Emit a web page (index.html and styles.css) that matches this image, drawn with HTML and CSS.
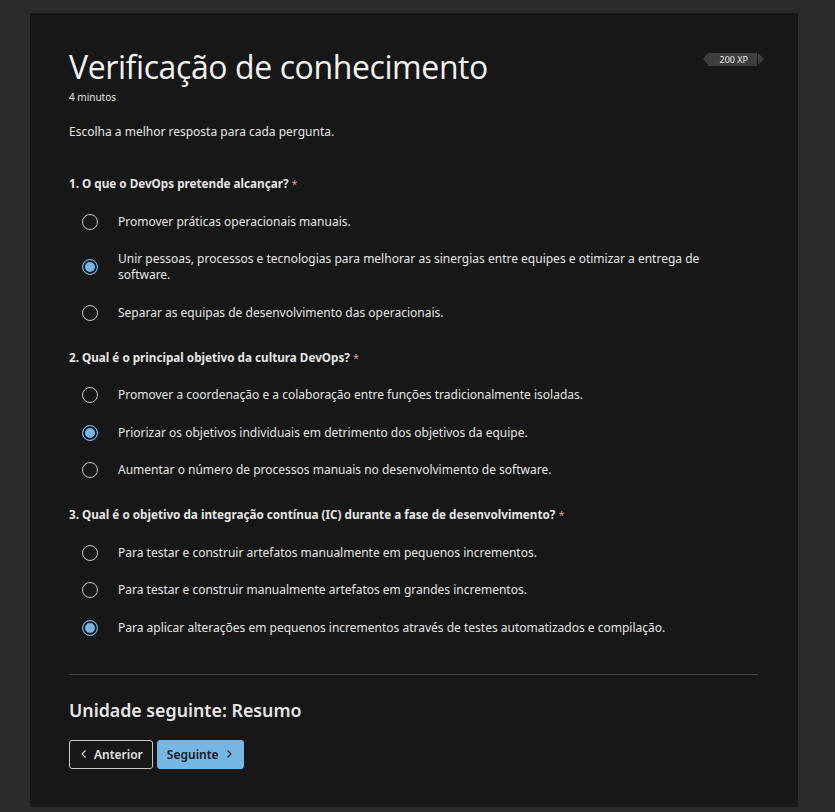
FILE: index.html
```html
<!DOCTYPE html>
<html lang="pt">
<head>
    <meta charset="UTF-8">
    <meta name="viewport" content="width=device-width, initial-scale=1.0">
    <title>Verificação de conhecimento</title>
    <link rel="stylesheet" href="styles.css">
</head>
<body>
    <div class="cartao">
        <div class="cabecalho">
            <div>
                <h1>Verificação de conhecimento</h1>
                <p class="duracao">4 minutos</p>
            </div>
            <span class="xp">200 XP</span>
        </div>
        <p class="instrucao">Escolha a melhor resposta para cada pergunta.</p>

        <div class="pergunta">
            <p class="enunciado">1. O que o DevOps pretende alcançar? <span class="obrig">*</span></p>
            <label class="opcao"><span class="radio"></span><span class="texto">Promover práticas operacionais manuais.</span></label>
            <label class="opcao"><span class="radio marcado"></span><span class="texto">Unir pessoas, processos e tecnologias para melhorar as sinergias entre equipes e otimizar a entrega de software.</span></label>
            <label class="opcao"><span class="radio"></span><span class="texto">Separar as equipas de desenvolvimento das operacionais.</span></label>
        </div>

        <div class="pergunta">
            <p class="enunciado">2. Qual é o principal objetivo da cultura DevOps? <span class="obrig">*</span></p>
            <label class="opcao"><span class="radio"></span><span class="texto">Promover a coordenação e a colaboração entre funções tradicionalmente isoladas.</span></label>
            <label class="opcao"><span class="radio marcado"></span><span class="texto">Priorizar os objetivos individuais em detrimento dos objetivos da equipe.</span></label>
            <label class="opcao"><span class="radio"></span><span class="texto">Aumentar o número de processos manuais no desenvolvimento de software.</span></label>
        </div>

        <div class="pergunta">
            <p class="enunciado">3. Qual é o objetivo da integração contínua (IC) durante a fase de desenvolvimento? <span class="obrig">*</span></p>
            <label class="opcao"><span class="radio"></span><span class="texto">Para testar e construir artefatos manualmente em pequenos incrementos.</span></label>
            <label class="opcao"><span class="radio"></span><span class="texto">Para testar e construir manualmente artefatos em grandes incrementos.</span></label>
            <label class="opcao"><span class="radio marcado"></span><span class="texto">Para aplicar alterações em pequenos incrementos através de testes automatizados e compilação.</span></label>
        </div>

        <hr class="divisor">

        <h2>Unidade seguinte: Resumo</h2>
        <div class="botoes">
            <button class="boto boto-contorno">
                <svg width="10" height="10" viewBox="0 0 10 10"><path d="M6.5 1.5 3 5l3.5 3.5" fill="none" stroke="currentColor" stroke-width="1.1"/></svg>
                Anterior
            </button>
            <button class="boto boto-primario">
                Seguinte
                <svg width="10" height="10" viewBox="0 0 10 10"><path d="M3.5 1.5 7 5 3.5 8.5" fill="none" stroke="currentColor" stroke-width="1.1"/></svg>
            </button>
        </div>
    </div>
</body>
</html>
```

FILE: styles.css
```css
html {
    height: 100%;
}

body {
    margin: 0;
    padding: 13px 37px 6px 30px;
    background: #2b2b2b;
    font-family: 'Noto Sans', sans-serif;
    color: #e6e6e6;
}

.cartao {
    background: #171717;
    padding: 34px 40px 38px 39px;
    min-height: 721px;
}

.cabecalho {
    display: flex;
    justify-content: space-between;
    align-items: flex-start;
}

h1 {
    margin: 0;
    font-family: 'Open Sans', sans-serif;
    font-size: 32px;
    font-weight: 400;
    line-height: 40px;
    letter-spacing: -0.4px;
    color: #f2f2f2;
}

.duracao {
    margin: 3px 0 0;
    font-size: 10px;
    line-height: 14px;
}

.xp {
    position: relative;
    margin: 6px 0 0 0;
    height: 13px;
    padding: 0 9px 0 11px;
    background: #3d3d3d;
    color: #e6e6e6;
    font-size: 9px;
    line-height: 13px;
    border-right: 1px solid #171717;
}

.xp::before {
    content: "";
    position: absolute;
    left: -5px;
    top: 0;
    border-top: 6.5px solid transparent;
    border-bottom: 6.5px solid transparent;
    border-right: 5px solid #3d3d3d;
}

.xp::after {
    content: "";
    position: absolute;
    right: -7px;
    top: 0;
    border-top: 6.5px solid transparent;
    border-bottom: 6.5px solid transparent;
    border-left: 6px solid #3d3d3d;
}

.instrucao {
    margin: 19px 0 0;
    font-size: 12px;
    line-height: 18px;
}

.pergunta {
    margin-top: 33px;
}

.pergunta + .pergunta {
    margin-top: 16px;
}

.enunciado {
    margin: 0 0 11px;
    height: 18px;
    font-size: 11.7px;
    font-weight: 700;
    line-height: 18px;
}

.obrig {
    color: #d99a9a;
    font-size: 11px;
    font-weight: 400;
    line-height: 1;
}

.opcao {
    display: flex;
    align-items: center;
    gap: 20px;
    padding: 10.75px 0 10.75px 13px;
    font-size: 12px;
    line-height: 16px;
    cursor: pointer;
}

.texto {
    max-width: 590px;
}

.radio {
    flex: none;
    width: 16px;
    height: 16px;
    box-sizing: border-box;
    border: 1.5px solid #c8c8c8;
    border-radius: 50%;
}

.radio.marcado {
    border-color: #75b6e7;
    background: #75b6e7;
    box-shadow: inset 0 0 0 2px #171717;
}

.divisor {
    margin: 27px 0 0;
    border: none;
    border-top: 1px solid #454545;
}

h2 {
    margin: 23px 0 0;
    font-size: 17.8px;
    font-weight: 600;
    line-height: 24px;
    color: #e6e6e6;
}

.botoes {
    display: flex;
    gap: 4px;
    margin-top: 18px;
}

.boto {
    display: inline-flex;
    align-items: center;
    gap: 5px;
    height: 29px;
    margin: 0;
    padding: 0 9px;
    border-radius: 3px;
    font-family: 'Noto Sans', sans-serif;
    font-size: 12px;
    font-weight: 600;
    cursor: pointer;
}

.boto-contorno {
    background: transparent;
    border: 1px solid #c8c8c8;
    color: #e6e6e6;
}

.boto-primario {
    background: #75b6e7;
    border: 1px solid #75b6e7;
    color: #171717;
}

.boto:hover {
    opacity: 0.9;
}
```
